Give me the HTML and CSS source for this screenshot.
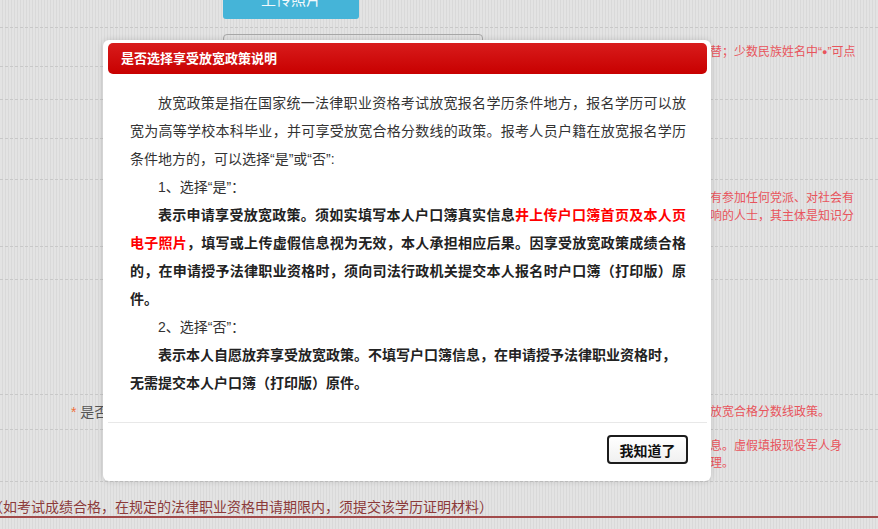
FILE: index.html
```html
<!DOCTYPE html>
<html lang="zh-CN">
<head>
    <meta charset="UTF-8">
    <meta name="viewport" content="width=device-width, initial-scale=1.0">
    <title>是否选择享受放宽政策说明</title>
    <link rel="stylesheet" href="styles.css">
</head>
<body>
    <div class="page">
        <div class="row row-photo">
            <div class="label"></div>
            <div class="field"><span class="upload">上传照片</span></div>
            <div class="tip"></div>
        </div>
        <div class="row row-name">
            <div class="label label-split"></div>
            <div class="field"><div class="input"></div></div>
            <div class="tip tip-name">替；少数民族姓名中“<span class="dot">●</span>”可点</div>
        </div>
        <div class="row row-a"><div class="label"></div><div class="field"></div><div class="tip"></div></div>
        <div class="row row-b"><div class="label"></div><div class="field"></div><div class="tip"></div></div>
        <div class="row row-party">
            <div class="label"></div>
            <div class="field"></div>
            <div class="tip tip-party">有参加任何党派、对社会有<br>响的人士，其主体是知识分</div>
        </div>
        <div class="row row-c"><div class="label"></div><div class="field"></div><div class="tip"></div></div>
        <div class="row row-d"><div class="label"></div><div class="field"></div><div class="tip"></div></div>
        <div class="row row-policy">
            <div class="label label-req"><span class="star">*</span> 是否选择享受放宽政策</div>
            <div class="field"></div>
            <div class="tip tip-line">放宽合格分数线政策。</div>
        </div>
        <div class="row row-army">
            <div class="label"></div>
            <div class="field"></div>
            <div class="tip tip-army">息。虚假填报现役军人身<br>理。</div>
        </div>
        <div class="row row-note">
            <div class="note">（如考试成绩合格，在规定的法律职业资格申请期限内，须提交该学历证明材料）</div>
        </div>
    </div>

    <div class="dialog">
        <div class="dialog-title">是否选择享受放宽政策说明</div>
        <div class="dialog-body">
            <p>放宽政策是指在国家统一法律职业资格考试放宽报名学历条件地方，报名学历可以放宽为高等学校本科毕业，并可享受放宽合格分数线的政策。报考人员户籍在放宽报名学历条件地方的，可以选择“是”或“否”:</p>
            <p>1、选择“是”：</p>
            <p class="strong">表示申请享受放宽政策。须如实填写本人户口簿真实信息<span class="red">井上传户口簿首页及本人页电子照片</span>，填写或上传虚假信息视为无效，本人承担相应后果。因享受放宽政策成绩合格的，在申请授予法律职业资格时，须向司法行政机关提交本人报名时户口簿（打印版）原件。</p>
            <p>2、选择“否”：</p>
            <p class="strong">表示本人自愿放弃享受放宽政策。不填写户口簿信息，在申请授予法律职业资格时，<br>无需提交本人户口簿（打印版）原件。</p>
        </div>
        <div class="dialog-foot">
            <button class="btn-ok">我知道了</button>
        </div>
    </div>
</body>
</html>
```

FILE: styles.css
```css
* {
    box-sizing: border-box;
}
body {
    margin: 0;
    width: 878px;
    height: 529px;
    overflow: hidden;
    font-family: "Liberation Sans", "Noto Sans CJK SC", sans-serif;
    background: repeating-linear-gradient(90deg, #e3e3e3 0 2px, #d9d9d9 2px 3px);
}
.row {
    display: grid;
    grid-template-columns: 223px 487px 1fr;
    border-bottom: 1px dashed #c8c8c8;
}
.row-photo { height: 28px; }
.row-name { height: 72px; }
.row-a { height: 39px; }
.row-b { height: 41px; }
.row-party { height: 67px; }
.row-c { height: 33px; }
.row-d { height: 115px; }
.row-policy { height: 35px; }
.row-army { height: 52px; }
.row-note {
    height: 36px;
    display: block;
    border-bottom: 2px solid #a24b4b;
}
.label-split {
    height: 39px;
    border-bottom: 1px dashed #c8c8c8;
}
.upload {
    display: block;
    width: 136px;
    height: 39px;
    margin-top: -20px;
    background: #45b4d8;
    border-radius: 3px;
    color: #f2f9fc;
    font-size: 15px;
    line-height: 39px;
    text-align: center;
}
.input {
    width: 260px;
    height: 30px;
    margin-top: 6px;
    border: 1px solid #a8a8a8;
    border-radius: 4px;
}
.tip {
    font-size: 12px;
    color: #e8545c;
    white-space: nowrap;
}
.tip-name {
    padding-top: 15px;
    line-height: 18px;
}
.dot {
    font-size: 9px;
    vertical-align: 1px;
}
.tip-party {
    padding-top: 9px;
    line-height: 18px;
}
.tip-line {
    line-height: 34px;
}
.tip-army {
    padding-top: 8px;
    line-height: 17px;
}
.label-req {
    padding-left: 71px;
    font-size: 14px;
    line-height: 34px;
    color: #555;
    white-space: nowrap;
}
.star {
    color: #f0703a;
}
.note {
    margin-left: -11px;
    padding-top: 15px;
    font-size: 14px;
    line-height: 20px;
    color: #8c3a3a;
    white-space: nowrap;
}

.dialog {
    position: absolute;
    left: 103px;
    top: 40px;
    width: 608px;
    height: 441px;
    padding: 3px 4px 0 5px;
    background: #fff;
    border-radius: 6px;
    box-shadow: 0 0 6px rgba(0, 0, 0, 0.15);
    display: flex;
    flex-direction: column;
}
.dialog-title {
    height: 31px;
    padding-left: 13px;
    border-radius: 5px;
    background: linear-gradient(#d81c1c, #c80000);
    color: #fff;
    font-size: 13px;
    font-weight: bold;
    line-height: 31px;
}
.dialog-body {
    flex: 1;
    padding: 15px 21px 0 22px;
    font-size: 14px;
    line-height: 28px;
    color: #333;
    border-bottom: 1px solid #e8e8e8;
}
.dialog-body p {
    margin: 0;
    text-indent: 28px;
    text-align: justify;
}
.dialog-body .strong {
    font-weight: bold;
    color: #222;
}
.red {
    color: #ff0000;
}
.dialog-foot {
    height: 58px;
    padding: 12px 19px 0 0;
    display: flex;
    justify-content: flex-end;
    align-items: flex-start;
}
.btn-ok {
    width: 81px;
    height: 29px;
    border: 2px solid #1c1c1c;
    border-radius: 4px;
    background: linear-gradient(#ffffff, #f0f0f0);
    font-family: "Liberation Sans", "Noto Sans CJK SC", sans-serif;
    font-size: 14px;
    font-weight: bold;
    color: #111;
    padding: 0;
}
```
